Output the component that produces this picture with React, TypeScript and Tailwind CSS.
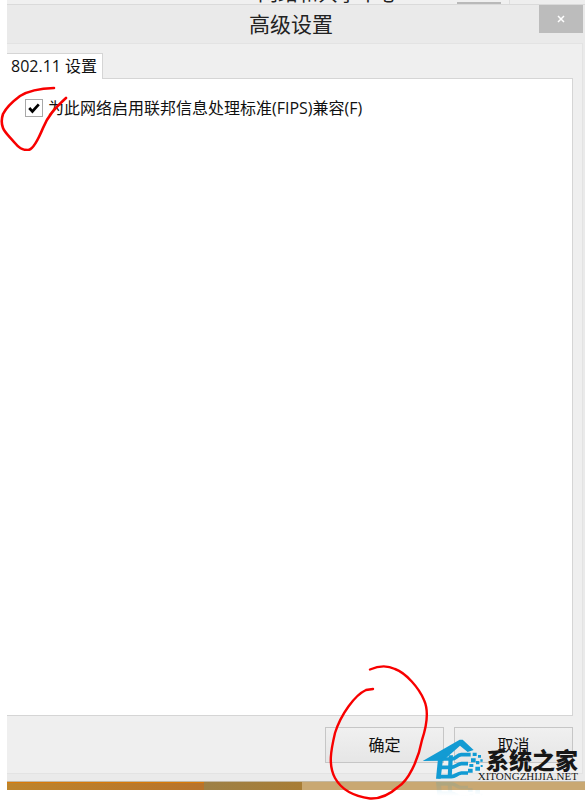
import React from "react";

const uiFont = "font-['Open_Sans','Noto_Sans_CJK_SC',sans-serif]";

function CheckMark() {
  return (
    <svg
      viewBox="0 0 17 17"
      className="pointer-events-none absolute inset-0 size-full"
      aria-hidden="true"
    >
      <path d="M4 8.5 7 11.8 13 5" fill="none" stroke="#000" strokeWidth="2.5" />
    </svg>
  );
}

function CheckboxCircle() {
  return (
    <svg
      viewBox="0 0 70 66"
      className="pointer-events-none absolute -top-[11px] -left-[25px] h-[66px] w-[70px]"
      aria-hidden="true"
    >
      <path
        d="M54 3C40 3.500 28 6 20 11C12 17 5 25 3 29C1 35 1 38 3 43C5 48 10 52 14 57C19 63 22 65 28 65C33 65 38 55 43 43C48 31 54 24 66 13"
        fill="none"
        stroke="#f80000"
        strokeWidth="2.6"
        strokeLinecap="round"
      />
    </svg>
  );
}

function ButtonCircle() {
  return (
    <svg
      viewBox="0 0 100 136"
      className="pointer-events-none absolute -top-[63px] left-[4px] h-[136px] w-[100px]"
      aria-hidden="true"
    >
      <path
        d="M41 5.500C49 2 58 1 66 5C77 9 90 24 95 36C100 47 98 61 93 76C89 97 79 117 69 123C59 132 51 135 41 134.500C23 132 12 125 6 114C-1 101 2 86 6 69C12 50 26 31 37 26L44 25"
        fill="none"
        stroke="#f80000"
        strokeWidth="2.4"
        strokeLinecap="round"
      />
    </svg>
  );
}

function HouseShape() {
  return (
    <g>
      <path d="M2 75 113 11h9l33 31-18 6-23-19-51 45Z" />
      <path d="M48 68H63L56 128H42Z" />
      <path d="M80 58H93L89 124H77Z" />
      <path
        d="M58 69H90C102 69 104 57 118 56H146M54 94H88C102 94 104 84 118 83H138M47 122H88C102 122 104 112 118 111H138"
        fill="none"
        stroke="currentColor"
        strokeWidth="11"
      />
      <path d="M152 50h12v10h-12zM168 57h9v8h-9zM147 67h14v12h-14zM162 75h10v10h-10zM175 70h7v7h-7zM142 84h12v9h-12zM160 92h14v12h-14zM138 98h14v12h-14zM176 87h6v6h-6z" />
    </g>
  );
}

function Watermark() {
  return (
    <aside className="pointer-events-none absolute right-[7px] bottom-[18px] z-20 flex items-end">
      <svg
        viewBox="0 0 186 186"
        className="-mr-[6px] -mb-4 size-[62px] shrink-0 text-[#129bd3]"
        aria-hidden="true"
      >
        <defs>
          <linearGradient id="reflection" x1="0" y1="0" x2="0" y2="1">
            <stop offset="0" stopColor="#fff" stopOpacity="0.2" />
            <stop offset="1" stopColor="#fff" stopOpacity="0" />
          </linearGradient>
          <mask id="fade" maskUnits="userSpaceOnUse" x="0" y="130" width="186" height="50">
            <rect y="130" width="186" height="50" fill="url(#reflection)" />
          </mask>
        </defs>
        <g fill="currentColor">
          <HouseShape />
          <g mask="url(#fade)">
            <g transform="translate(0 266) scale(1 -1)">
              <HouseShape />
            </g>
          </g>
        </g>
      </svg>
      <div className="flex flex-col items-end whitespace-nowrap text-[#171717]">
        <strong className="text-[23px] leading-5 font-black">系统之家</strong>
        <span className="font-['Liberation_Serif',serif] text-[11px] leading-3">
          XITONGZHIJIA.NET
        </span>
      </div>
    </aside>
  );
}

const buttonClass =
  "h-9 w-[119px] border border-[#c6c6c6] bg-linear-to-b from-[#f0f0f0] to-[#e6e6e6] text-base leading-6";

export default function App() {
  return (
    <main
      className={`relative flex min-h-screen flex-col overflow-hidden bg-white pb-[10px] pl-[7px] text-base text-[#111] ${uiFont}`}
    >
      <div className="flex h-1 items-end justify-center bg-[#f0f0f0]">
        <div className="relative h-1 grow overflow-hidden border-r border-[#dedede]">
          <span className="absolute bottom-0 left-1/2 text-xl leading-5 whitespace-nowrap text-[#222]">
            网络和共享中心
          </span>
          <span className="absolute right-2 bottom-0 h-[2px] w-11 bg-[#b9b9b9]" />
        </div>
        <div className="h-1 w-[75px] bg-[#eeeeee]" />
      </div>

      <section className="flex grow flex-col border-t border-[#dadada] bg-[#eaeaea] pr-[2px]">
        <header className="flex h-[38px] items-start">
          <h1 className="grow pl-9 text-center text-[21px] leading-[38px] text-[#222]">
            高级设置
          </h1>
          <button
            type="button"
            aria-label="关闭"
            className="flex h-7 w-11 items-center justify-center bg-[#bcbcbc]"
          >
            <svg viewBox="0 0 8 8" className="size-2" aria-hidden="true">
              <path d="M1 1 7 7M7 1 1 7" stroke="#fff" strokeWidth="1.5" />
            </svg>
          </button>
        </header>

        <div className="flex grow flex-col border-y border-r border-[#e3e3e3] bg-[#efefef] pt-[9px] pr-[9px] pb-[10px]">
          <div role="tablist" className="flex">
            <button
              type="button"
              role="tab"
              aria-selected="true"
              className="relative z-10 -mb-px h-[26px] border-t border-r border-[#d5d5d5] bg-white pr-[5px] pb-px pl-1 leading-6 whitespace-nowrap"
            >
              802.11 设置
            </button>
          </div>

          <div
            role="tabpanel"
            className="grow border-y border-r border-[#d5d5d5] bg-white pt-[17px] pl-[18px]"
          >
            <div className="relative flex items-center gap-[5px]">
              <span className="relative size-[18px] shrink-0">
                <input
                  id="fips"
                  type="checkbox"
                  defaultChecked
                  className="block size-[18px] appearance-none border border-[#a8a8a8] bg-white"
                />
                <CheckMark />
              </span>
              <label htmlFor="fips" className="leading-6">
                为此网络启用联邦信息处理标准(FIPS)兼容(F)
              </label>
              <CheckboxCircle />
            </div>
          </div>

          <footer className="flex justify-end gap-[10px] pt-[11px]">
            <div className="relative z-10">
              <button type="button" className={buttonClass}>
                确定
              </button>
              <ButtonCircle />
            </div>
            <button type="button" className={buttonClass}>
              取消
            </button>
          </footer>
        </div>
        <div className="h-[7px]" />
      </section>

      <div className="flex h-[9px] border-t border-[#c3b8a2]" aria-hidden="true">
        <div className="w-[34%] border-t border-[#d97a08] bg-linear-to-r from-[#bd842b] to-[#b8732a]" />
        <div className="w-[17%] bg-linear-to-r from-[#9d8045] to-[#a87d35]" />
        <div className="grow bg-[#c9a872]" />
      </div>

      <Watermark />
    </main>
  );
}
